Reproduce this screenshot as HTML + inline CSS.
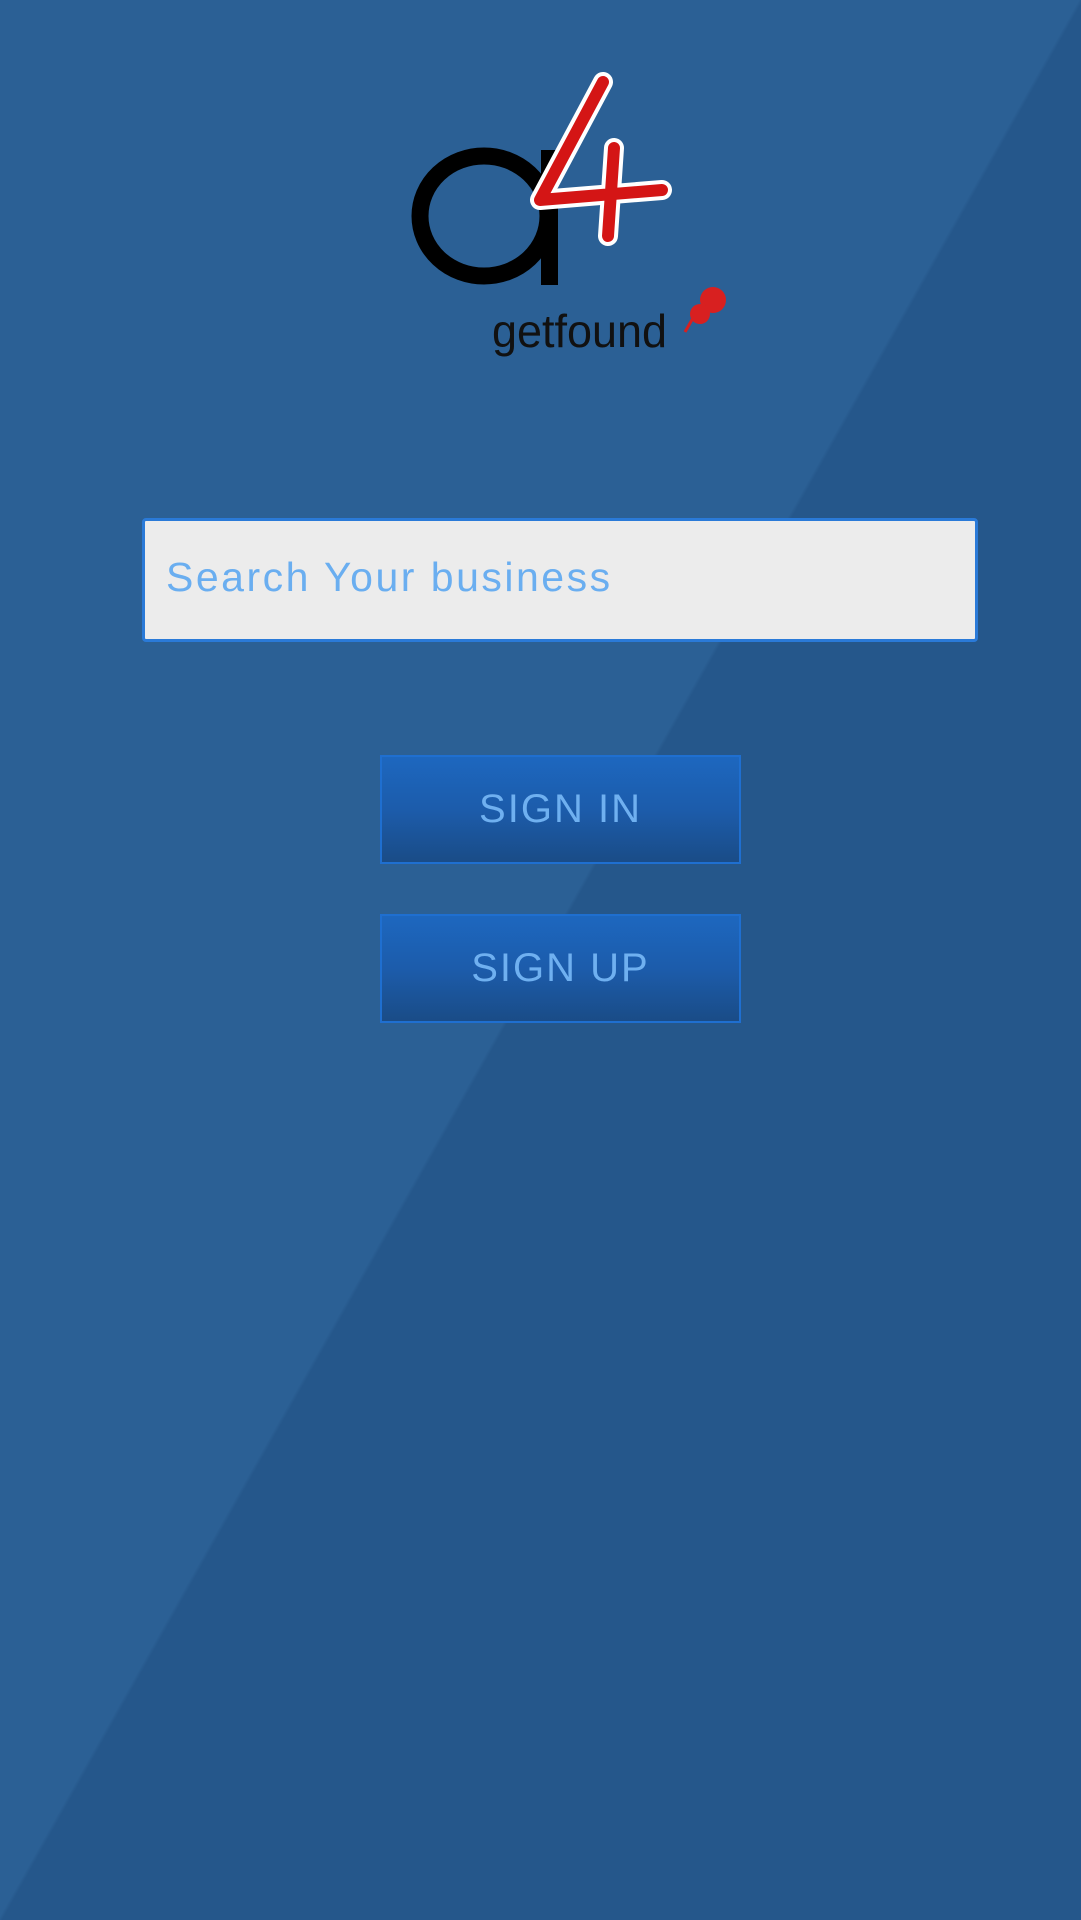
<!DOCTYPE html>
<html><head><meta charset="utf-8"><style>
html,body{margin:0;padding:0}
body{width:1081px;height:1920px;position:relative;overflow:hidden;font-family:"Liberation Sans",sans-serif;
background:linear-gradient(to bottom right,#2b6095 0%,#2b6095 49.9%,#25578b 50.1%,#25578b 100%);}
.inp{position:absolute;left:142px;top:518px;width:830px;height:118px;background:#ececec;border:3px solid #2a7ad8;border-radius:4px;}
.inp span{position:absolute;left:21px;top:33px;font-size:41px;color:#6aaef0;letter-spacing:2.5px;}
.btn{position:absolute;left:380px;width:357px;height:105px;border:2px solid #1f6fd0;background:linear-gradient(#1d67bf,#1c5cab 50%,#1a4c87);color:#6fb0f0;font-size:40px;letter-spacing:2px;text-align:center;line-height:105px;}
</style></head><body>
<svg style="position:absolute;left:0;top:0" width="1081" height="400">
<ellipse cx="484" cy="216" rx="64" ry="60" fill="none" stroke="#000" stroke-width="17"/>
<rect x="541" y="150" width="17" height="135" fill="#000"/>
<g fill="none" stroke-linecap="round" stroke-linejoin="round">
<path d="M603 82 L540 200 L662 190 M614 148 L608 236" stroke="#fff" stroke-width="20"/>
<path d="M603 82 L540 200 L662 190 M614 148 L608 236" stroke="#d41515" stroke-width="12"/>
</g>
<text x="492" y="347" font-size="46" font-family="Liberation Sans" fill="#111" textLength="175" lengthAdjust="spacingAndGlyphs">getfound</text>
<g fill="#d82020">
<circle cx="713" cy="300" r="13"/>
<circle cx="700" cy="314" r="10"/>
<path d="M693 318 L685 332" stroke="#d82020" stroke-width="3"/>
</g>
</svg>
<div class="inp"><span>Search Your business</span></div>
<div class="btn" style="top:755px">SIGN IN</div>
<div class="btn" style="top:914px">SIGN UP</div>
</body></html>
